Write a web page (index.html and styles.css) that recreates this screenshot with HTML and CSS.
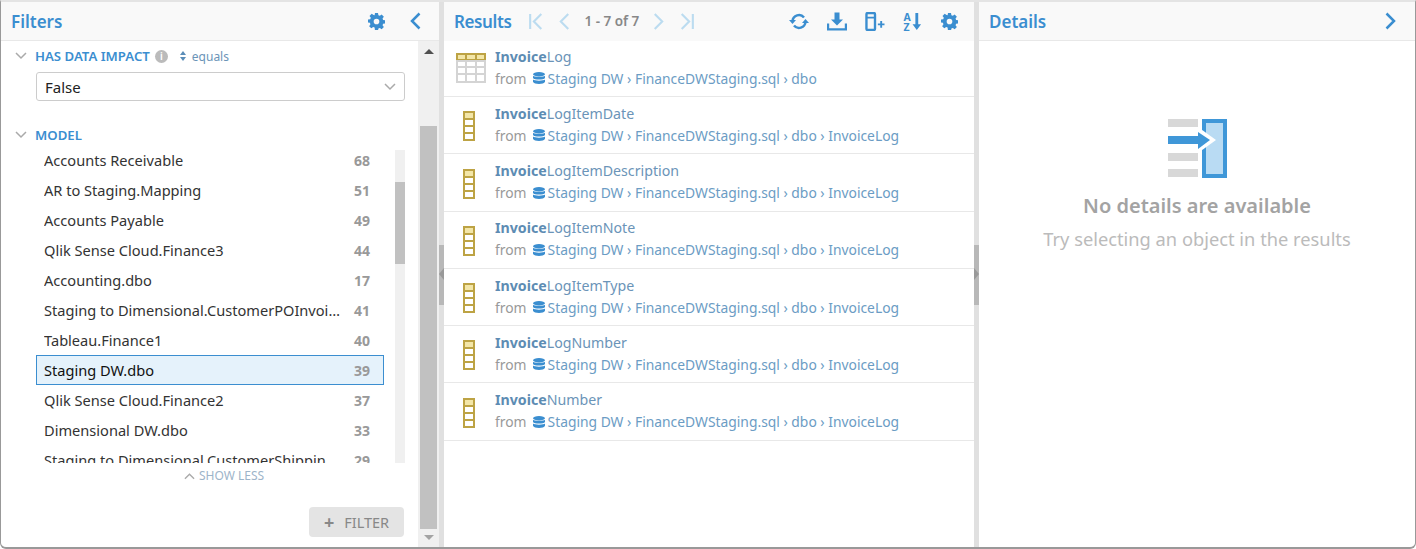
FILE: index.html
```html
<!DOCTYPE html>
<html lang="en">
  <head>
    <meta charset="UTF-8" />
    <title>Search</title>
    <link rel="stylesheet" href="styles.css">
  </head>
  <body>
    <svg class="defs" width="0" height="0">
      <symbol id="gear" viewBox="0 0 18 18">
        <path fill-rule="evenodd" d="M7.400 0h3.200l.4 2.400 1.500.6 2-1.400 2.300 2.300-1.400 2 .6 1.500 2.400.4v3.200l-2.400.4-.6 1.500 1.400 2-2.300 2.300-2-1.400-1.500.6-.4 2.400H7.400L7 15.400 5.500 14.800l-2 1.400-2.300-2.300 1.400-2-.6-1.500L-.1 10V7l2.500-.4.6-1.500-1.400-2 2.300-2.300 2 1.400L7 2.400zM9 6a3 3 0 1 0 0 6 3 3 0 0 0 0-6z"/>
      </symbol>
      <symbol id="column" viewBox="0 0 12 30">
        <rect x="0" y="0" width="12" height="30" fill="#bda344"/>
        <rect x="2" y="2" width="8" height="5" fill="#f3e6a8"/>
        <rect x="2" y="9" width="8" height="5" fill="#fff"/>
        <rect x="2" y="16" width="8" height="5" fill="#fff"/>
        <rect x="2" y="23" width="8" height="5" fill="#fff"/>
      </symbol>
      <symbol id="db" viewBox="0 0 12 12">
        <ellipse cx="6" cy="2.200" rx="6" ry="2.200"/>
        <path d="M0 3.700c1 1.500 11 1.500 12 0v2.300c-1 2-11 2-12 0zM0 7.500c1 1.500 11 1.500 12 0v2.300c-1 2.900-11 2.900-12 0z"/>
      </symbol>
    </svg>

    <div class="panes">
      <!-- Filters -->
      <section class="pane filters">
        <header class="pane-head">
          <h2>Filters</h2>
          <svg class="head-icon gear-icon"><use href="#gear"/></svg>
          <svg class="head-icon chevron" viewBox="0 0 12 18"><path d="M10 1.500 2.500 9l7.500 7.500"/></svg>
        </header>
        <div class="filters-body">
          <div class="filters-scroll">
            <div class="facet-title">
              <svg class="caret" viewBox="0 0 12 8"><path d="M1 1l5 5 5-5"/></svg>
              <span>HAS DATA IMPACT</span>
              <span class="info">i</span>
              <span class="sort-arrows"><i class="up"></i><i class="down"></i></span>
              <span class="equals">equals</span>
            </div>
            <div class="select">
              <span>False</span>
              <svg class="caret" viewBox="0 0 12 8"><path d="M1 1l5 5 5-5"/></svg>
            </div>
            <div class="facet-title model-title">
              <svg class="caret" viewBox="0 0 12 8"><path d="M1 1l5 5 5-5"/></svg>
              <span>MODEL</span>
            </div>
            <div class="model-wrap">
              <ul class="model-list">
                <li><span class="name">Accounts Receivable</span><b>68</b></li>
                <li><span class="name">AR to Staging.Mapping</span><b>51</b></li>
                <li><span class="name">Accounts Payable</span><b>49</b></li>
                <li><span class="name">Qlik Sense Cloud.Finance3</span><b>44</b></li>
                <li><span class="name">Accounting.dbo</span><b>17</b></li>
                <li><span class="name">Staging to Dimensional.CustomerPOInvoiceHeader</span><b>41</b></li>
                <li><span class="name">Tableau.Finance1</span><b>40</b></li>
                <li class="selected"><span class="name">Staging DW.dbo</span><b>39</b></li>
                <li><span class="name">Qlik Sense Cloud.Finance2</span><b>37</b></li>
                <li><span class="name">Dimensional DW.dbo</span><b>33</b></li>
                <li><span class="name">Staging to Dimensional.CustomerShippingAddress</span><b>29</b></li>
              </ul>
              <div class="mini-track"><div class="mini-thumb"></div></div>
            </div>
            <div class="show-less">
              <svg class="caret" viewBox="0 0 12 8"><path d="M1 7l5-5 5 5"/></svg>
              <span>SHOW LESS</span>
            </div>
            <div class="filter-row"><button class="filter-btn"><em>+</em>FILTER</button></div>
          </div>
          <div class="scrollbar">
            <i class="arrow-up"></i>
            <div class="thumb"></div>
            <i class="arrow-down"></i>
          </div>
        </div>
      </section>

      <div class="splitter left"><span class="grip"></span></div>

      <!-- Results -->
      <section class="pane results">
        <header class="pane-head">
          <h2>Results</h2>
          <div class="pager">
            <svg viewBox="0 0 14 16"><path d="M1.500 1v14M12 1 5 8l7 7"/></svg>
            <svg viewBox="0 0 14 16"><path d="M11 1 4 8l7 7"/></svg>
            <span>1 - 7 of 7</span>
            <svg viewBox="0 0 14 16"><path d="M3 1l7 7-7 7"/></svg>
            <svg viewBox="0 0 14 16"><path d="M12.500 1v14M2 1l7 7-7 7"/></svg>
          </div>
          <div class="tools">
            <svg viewBox="0 0 20 18"><path class="line" d="M3.500 8.500a6.500 6.500 0 0 1 11.500-3.500M16.500 9.500a6.500 6.500 0 0 1-11.500 3.500"/><path d="M0 7.500h7L3.500 11.500zM20 10.500h-7l3.500-4z"/></svg>
            <svg viewBox="0 0 20 18"><path d="M7.500 0h5v7h3.500L10 13 4 7h3.500z"/><path d="M0 11h2.200v4.800h15.600V11H20v7H0z"/></svg>
            <svg viewBox="0 0 20 20"><rect class="line" x="1" y="1" width="9" height="18" rx="1.500"/><path d="M1 5h9v1.800H1zM13 12h2.500V9.500h2V12H20v2h-2.500v2.500h-2V14H13z"/></svg>
            <svg viewBox="0 0 20 20"><text x="0" y="9" class="az">A</text><text x="0" y="19.500" class="az">Z</text><path d="M12.500 1h3v12h3l-4.500 6-4.500-6h3z"/></svg>
            <svg class="gear-icon"><use href="#gear"/></svg>
          </div>
        </header>
        <div class="result-list">
          <div class="result">
            <svg class="table-icon" viewBox="0 0 30 30">
              <rect x="0" y="0" width="30" height="30" fill="#d4d4d4"/>
              <rect x="0" y="0" width="30" height="7" fill="#bda344"/>
              <rect x="2" y="2" width="7" height="4" fill="#f3e6a8"/><rect x="11" y="2" width="8" height="4" fill="#f3e6a8"/><rect x="21" y="2" width="7" height="4" fill="#f3e6a8"/>
              <rect x="2" y="9" width="7" height="4" fill="#fff"/><rect x="11" y="9" width="8" height="4" fill="#fff"/><rect x="21" y="9" width="7" height="4" fill="#fff"/>
              <rect x="2" y="15" width="7" height="5" fill="#fff"/><rect x="11" y="15" width="8" height="5" fill="#fff"/><rect x="21" y="15" width="7" height="5" fill="#fff"/>
              <rect x="2" y="22" width="7" height="6" fill="#fff"/><rect x="11" y="22" width="8" height="6" fill="#fff"/><rect x="21" y="22" width="7" height="6" fill="#fff"/>
            </svg>
            <div class="result-text">
              <div class="result-name"><b>Invoice</b>Log</div>
              <div class="result-path">from <svg class="db"><use href="#db"/></svg><span>Staging DW › FinanceDWStaging.sql › dbo</span></div>
            </div>
          </div>
          <div class="result">
            <svg class="col-icon"><use href="#column"/></svg>
            <div class="result-text">
              <div class="result-name"><b>Invoice</b>LogItemDate</div>
              <div class="result-path">from <svg class="db"><use href="#db"/></svg><span>Staging DW › FinanceDWStaging.sql › dbo › InvoiceLog</span></div>
            </div>
          </div>
          <div class="result">
            <svg class="col-icon"><use href="#column"/></svg>
            <div class="result-text">
              <div class="result-name"><b>Invoice</b>LogItemDescription</div>
              <div class="result-path">from <svg class="db"><use href="#db"/></svg><span>Staging DW › FinanceDWStaging.sql › dbo › InvoiceLog</span></div>
            </div>
          </div>
          <div class="result">
            <svg class="col-icon"><use href="#column"/></svg>
            <div class="result-text">
              <div class="result-name"><b>Invoice</b>LogItemNote</div>
              <div class="result-path">from <svg class="db"><use href="#db"/></svg><span>Staging DW › FinanceDWStaging.sql › dbo › InvoiceLog</span></div>
            </div>
          </div>
          <div class="result">
            <svg class="col-icon"><use href="#column"/></svg>
            <div class="result-text">
              <div class="result-name"><b>Invoice</b>LogItemType</div>
              <div class="result-path">from <svg class="db"><use href="#db"/></svg><span>Staging DW › FinanceDWStaging.sql › dbo › InvoiceLog</span></div>
            </div>
          </div>
          <div class="result">
            <svg class="col-icon"><use href="#column"/></svg>
            <div class="result-text">
              <div class="result-name"><b>Invoice</b>LogNumber</div>
              <div class="result-path">from <svg class="db"><use href="#db"/></svg><span>Staging DW › FinanceDWStaging.sql › dbo › InvoiceLog</span></div>
            </div>
          </div>
          <div class="result">
            <svg class="col-icon"><use href="#column"/></svg>
            <div class="result-text">
              <div class="result-name"><b>Invoice</b>Number</div>
              <div class="result-path">from <svg class="db"><use href="#db"/></svg><span>Staging DW › FinanceDWStaging.sql › dbo › InvoiceLog</span></div>
            </div>
          </div>
        </div>
      </section>

      <div class="splitter right"><span class="grip"></span></div>

      <!-- Details -->
      <section class="pane details">
        <header class="pane-head">
          <h2>Details</h2>
          <svg class="head-icon chevron" viewBox="0 0 12 18"><path d="M2 1.500 9.500 9 2 16.500"/></svg>
        </header>
        <div class="empty">
          <svg class="empty-icon" viewBox="0 0 60 60">
            <rect x="1" y="0" width="30" height="8" fill="#d8d8d8"/>
            <rect x="1" y="34" width="30" height="8" fill="#d8d8d8"/>
            <rect x="1" y="50" width="30" height="8" fill="#d8d8d8"/>
            <rect x="35" y="0" width="25" height="59" fill="#3f97d8"/>
            <rect x="39" y="4" width="17" height="51" fill="#b9dbf3"/>
            <rect x="1" y="17" width="30" height="8" fill="#3f97d8"/>
            <path d="M31 8 49 21 31 34z" fill="#fff"/>
            <path d="M31 13 43 21 31 30z" fill="#3f97d8"/>
          </svg>
          <div class="empty-title">No details are available</div>
          <div class="empty-sub">Try selecting an object in the results</div>
        </div>
      </section>
    </div>
  </body>
</html>
```

FILE: styles.css
```css
* {
  box-sizing: border-box;
}

html,
body {
  height: 100%;
}

body {
  margin: 0;
  overflow: hidden;
  font-family: "Noto Sans", sans-serif;
  font-size: 14px;
  color: #333;
  background-color: #fff;
}

.defs {
  display: block;
  height: 0;
}

.panes {
  display: flex;
  height: 549px;
  border-top: 2px solid #e4e4e4;
  border-bottom: 2px solid #999;
  border-left: 1px solid #999;
  border-right: 1px solid #999;
  border-radius: 0 0 6px 6px;
  overflow: hidden;
}

.pane {
  display: flex;
  flex-direction: column;
  min-width: 0;
}

.filters {
  width: 438px;
}

.results {
  width: 530px;
}

.details {
  flex: 1;
}

.splitter {
  position: relative;
  width: 5px;
  background-color: #e0e0e0;
}

.grip {
  position: absolute;
  top: 243px;
  left: 0;
  width: 5px;
  height: 60px;
  background-color: #b8b8b8;
}

.grip::after {
  content: "";
  position: absolute;
  top: 23px;
  left: 0;
  width: 0;
  height: 0;
  border-top: 6px solid transparent;
  border-bottom: 6px solid transparent;
}

.left .grip::after {
  border-right: 5px solid #999;
}

.right .grip::after {
  border-left: 5px solid #999;
}

.pane-head {
  display: flex;
  flex: none;
  align-items: center;
  height: 39px;
  padding: 0 10px;
  background-color: #f9f9f9;
  border-bottom: 1px solid #e8e8e8;
}

.results .pane-head {
  border-bottom-color: #f9f9f9;
}

.pane-head h2 {
  margin: 0;
  font-size: 17px;
  font-weight: 600;
  color: #3b8ed0;
}

.results .pane-head h2 {
  letter-spacing: -0.4px;
}

.filters .pane-head h2,
.details .pane-head h2 {
  flex: 1;
}

.head-icon {
  fill: none;
  stroke: #3b8ed0;
  stroke-width: 2.5;
}

.gear-icon {
  width: 17px;
  height: 17px;
  fill: #3b8ed0;
  stroke: none;
}

.chevron {
  width: 13px;
  height: 18px;
  margin-left: 24px;
}

.filters .pane-head {
  padding-right: 17px;
}

.details .pane-head {
  padding-right: 18px;
}

.filters-body {
  display: flex;
  flex: 1;
  min-height: 0;
}

.filters-scroll {
  flex: 1;
  min-width: 0;
  padding: 5px 13px 0 14px;
}

.caret {
  width: 12px;
  height: 8px;
  fill: none;
  stroke: #aaa;
  stroke-width: 1.500;
}

.facet-title {
  display: flex;
  align-items: center;
  height: 20px;
  font-size: 13.2px;
  font-weight: 600;
  color: #3b8ed0;
}

.facet-title .caret {
  margin-right: 8px;
}

.info {
  width: 13px;
  height: 13px;
  margin-left: 5px;
  border-radius: 50%;
  background-color: #bbb;
  color: #fff;
  font-size: 10px;
  line-height: 13px;
  text-align: center;
}

.sort-arrows {
  display: flex;
  flex-direction: column;
  gap: 2px;
  margin: 0 6px 0 12px;
}

.sort-arrows i {
  width: 0;
  height: 0;
  border-left: 3px solid transparent;
  border-right: 3px solid transparent;
}

.sort-arrows .up {
  border-bottom: 4px solid #5a8db8;
}

.sort-arrows .down {
  border-top: 4px solid #5a8db8;
}

.equals {
  font-size: 12px;
  font-weight: 400;
  color: #6b94b8;
}

.select {
  display: flex;
  align-items: center;
  justify-content: space-between;
  height: 29px;
  margin: 6px 0 0 21px;
  padding: 0 8px;
  border: 1px solid #ccc;
  border-radius: 3px;
  font-size: 15px;
  color: #222;
}

.model-title {
  margin-top: 24px;
}

.model-wrap {
  display: flex;
  height: 313px;
  margin-top: 5px;
  overflow: hidden;
}

.model-list {
  flex: none;
  width: 348px;
  margin: -5px 0 0 21px;
  padding: 0;
  list-style: none;
}

.model-list li {
  display: flex;
  align-items: center;
  justify-content: space-between;
  height: 30px;
  padding: 0 13px 0 7px;
  border: 1px solid transparent;
}

.name {
  width: 300px;
  overflow: hidden;
  white-space: nowrap;
  text-overflow: ellipsis;
  font-size: 14.6px;
}

.model-list b {
  color: #999;
  font-size: 14px;
}

.model-list .selected {
  background-color: #e5f2fb;
  border-color: #3b8ed0;
  color: #111;
}

.mini-track {
  flex: none;
  width: 10px;
  margin-left: 11px;
  background-color: #f0f0f0;
}

.mini-thumb {
  height: 82px;
  margin-top: 32px;
  background-color: #c1c1c1;
}

.show-less {
  display: flex;
  align-items: center;
  justify-content: center;
  gap: 4px;
  height: 25px;
  padding-left: 28px;
  font-size: 12px;
  color: #9db4c9;
}

.show-less .caret {
  width: 11px;
}

.filter-row {
  display: flex;
  justify-content: flex-end;
  margin-top: 19px;
  padding-right: 1px;
}

.filter-btn {
  display: flex;
  align-items: center;
  justify-content: center;
  height: 30px;
  width: 95px;
  padding-bottom: 2px;
  border: 0;
  border-radius: 4px;
  background-color: #e4e4e4;
  color: #888;
  font: inherit;
  font-size: 14.5px;
}

.filter-btn em {
  margin-right: 10px;
  font-size: 18px;
  font-style: normal;
  font-weight: 700;
  line-height: 1;
}

.scrollbar {
  display: flex;
  flex: none;
  flex-direction: column;
  align-items: center;
  width: 21px;
  background-color: #f0f0f0;
}

.thumb {
  flex: 1;
  width: 17px;
  margin-top: 72px;
  background-color: #c1c1c1;
}

.arrow-up,
.arrow-down {
  display: block;
  flex: none;
  width: 0;
  height: 0;
  border-left: 5px solid transparent;
  border-right: 5px solid transparent;
}

.arrow-up {
  margin-top: 8px;
  border-bottom: 5px solid #505050;
}

.arrow-down {
  margin: 6px 0 7px;
  border-top: 5px solid #a3a3a3;
}

.pager {
  display: flex;
  align-items: center;
  gap: 12px;
  margin-left: 17px;
}

.pager svg {
  width: 16px;
  height: 17px;
  fill: none;
  stroke: #bcdcf0;
  stroke-width: 2;
}

.pager span {
  font-size: 13.5px;
  font-weight: 600;
  color: #888;
}

.tools {
  display: flex;
  align-items: center;
  gap: 18px;
  margin-left: auto;
  padding-right: 5px;
}

.tools svg {
  width: 20px;
  height: 19px;
  fill: #3b8ed0;
}

.tools .gear-icon {
  width: 17px;
  height: 17px;
  margin-right: 1px;
}

.tools .line {
  fill: none;
  stroke: #3b8ed0;
  stroke-width: 2.500;
}

.az {
  font-size: 11px;
  font-weight: 700;
}

.result-list {
  margin-top: -1.1px;
}

.result {
  display: flex;
  align-items: center;
  height: 57.25px;
  border-bottom: 1px solid #e8e8e8;
}

.table-icon {
  flex: none;
  width: 30px;
  height: 30px;
  margin: 0 9px 0 12px;
}

.col-icon {
  flex: none;
  width: 12px;
  height: 30px;
  margin: 2px 20px 0 19px;
}

.result-text {
  padding-bottom: 2px;
}

.result-name {
  font-size: 14.2px;
  color: #6b94b8;
}

.result-name b {
  color: #5d8cb3;
}

.result-path {
  display: flex;
  align-items: center;
  margin-top: 3px;
  font-size: 13.85px;
  color: #999;
}

.result-path span {
  color: #6b9cc4;
}

.db {
  width: 12px;
  height: 12px;
  margin: 0 3px 0 6px;
  fill: #3b8ed0;
}

.empty {
  display: flex;
  flex-direction: column;
  align-items: center;
  padding-top: 78px;
}

.empty-icon {
  width: 60px;
  height: 60px;
}

.empty-title {
  margin-top: 13px;
  font-size: 20px;
  font-weight: 600;
  color: #a3a3a3;
}

.empty-sub {
  margin-top: 7px;
  font-size: 18.3px;
  color: #bbb;
}
```
